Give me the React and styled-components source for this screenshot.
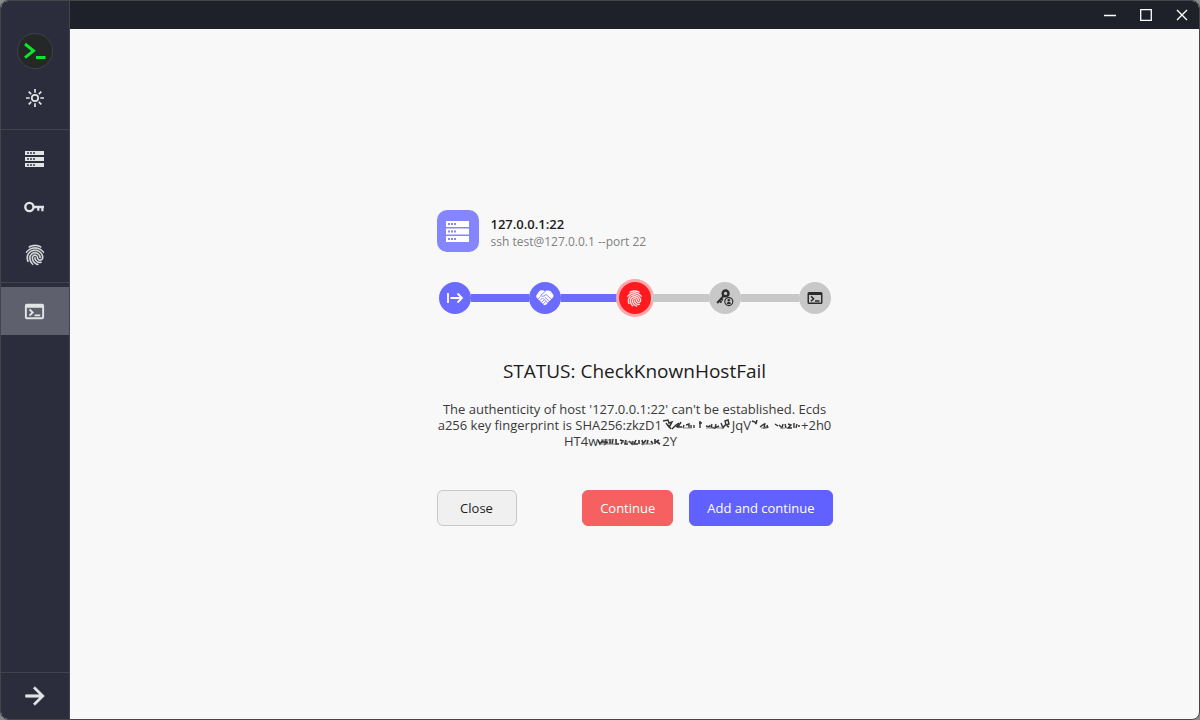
import React from "react";
import styled, { createGlobalStyle, css } from "styled-components";
import { MdArrowForward, MdFingerprint, MdTerminal } from "react-icons/md";

const GlobalStyle = createGlobalStyle`
  *, *::before, *::after { box-sizing: border-box; }
  html, body, #root { height: 100%; }
  body {
    margin: 0;
    background: #8a8a8a;
    color: #1c1c1c;
    font-family: "Open Sans", "Noto Sans", sans-serif;
    font-size: 14px;
  }
  button { font: inherit; cursor: pointer; }
`;

const Window = styled.div`
  display: flex;
  height: 100%;
  overflow: hidden;
  border: 1px solid #43454a;
  border-radius: 8px;
  background: #f8f8f8;
`;

const Sidebar = styled.nav`
  display: flex;
  flex: none;
  flex-direction: column;
  width: 69px;
  border-right: 1px solid #41434f;
  background: #2b2d3c;
`;

const SidebarGroup = styled.div`
  display: flex;
  flex-direction: column;
  align-items: center;
  padding: ${({ $pad }) => $pad || "0"};
  border-bottom: ${({ $line }) => ($line ? "1px solid #41434f" : "0")};
`;

const SidebarButton = styled.button`
  display: flex;
  align-items: center;
  justify-content: center;
  width: 100%;
  height: 48px;
  padding: 0 1px 0 0;
  border: 0;
  background: ${({ $active }) => ($active ? "#5e606d" : "transparent")};
  color: #e2e3e4;
`;

const SidebarFooter = styled(SidebarGroup)`
  margin-top: auto;
  border-top: 1px solid #41434f;

  ${SidebarButton} {
    height: 46px;
  }
`;

const Logo = styled.div`
  display: flex;
  align-items: center;
  justify-content: center;
  width: 36px;
  height: 36px;
  margin-bottom: 5px;
  border: 1px solid #3f414c;
  border-radius: 50%;
  background: #262727;
`;

const Main = styled.div`
  display: flex;
  flex: 1;
  flex-direction: column;
  min-width: 0;
`;

const TitleBar = styled.header`
  display: flex;
  flex: none;
  justify-content: flex-end;
  height: 28px;
  background: #1e2129;
`;

const WindowButton = styled.button`
  display: flex;
  align-items: center;
  justify-content: center;
  width: 36px;
  padding: 0 0 0 2px;
  border: 0;
  background: transparent;
  color: #fff;
`;

const Page = styled.main`
  display: flex;
  flex: 1;
  align-items: center;
  justify-content: center;
  padding-bottom: 12px;
`;

const Panel = styled.section`
  width: 396px;
`;

const Host = styled.div`
  display: flex;
  align-items: center;
  gap: 12px;
  height: 42px;
`;

const HostIcon = styled.div`
  display: flex;
  align-items: center;
  justify-content: center;
  width: 42px;
  height: 42px;
  border-radius: 10px;
  background: #8585ff;
  color: #fff;
`;

const HostText = styled.div`
  padding-top: 4px;
  line-height: 18px;
`;

const HostName = styled.div`
  font-size: 13px;
  font-weight: 600;
`;

const HostCommand = styled.div`
  color: #808080;
  font-size: 12px;
`;

const Steps = styled.ol`
  display: flex;
  align-items: center;
  margin: 27px 0 0;
  padding: 0 2px;
  height: 38px;
  list-style: none;
`;

const stepTones = {
  done: css`background: #6b6bff; color: #fff;`,
  failed: css`background: #ff1a1f; color: #fff; box-shadow: 0 0 0 3px #faa9ab;`,
  pending: css`background: #c8c8c8; color: #2c2c2c;`,
};

const Step = styled.li`
  display: flex;
  flex: none;
  align-items: center;
  justify-content: center;
  width: 32px;
  height: 32px;
  border-radius: 50%;
  ${({ $tone }) => stepTones[$tone]}
`;

const Connector = styled.li`
  flex: 1;
  height: 8px;
  background: ${({ $done }) => ($done ? "#6b6bff" : "#c8c8c8")};
`;

const Status = styled.h1`
  margin: 40px 0 0;
  font-size: 19px;
  font-weight: 400;
  line-height: 28px;
  text-align: center;
`;

const Message = styled.p`
  margin: 16px 0 0;
  color: #3a3a3a;
  font-size: 13px;
  line-height: 16px;
  text-align: center;
  white-space: nowrap;
`;

const MessageLine = styled.span`
  display: flex;
  align-items: center;
  justify-content: center;
`;

const Blank = styled.span`
  width: 28px;
`;

const Actions = styled.div`
  display: flex;
  gap: 16px;
  margin-top: 41px;
`;

const buttonTones = {
  plain: css`border-color: #c8c8c8; background: #f0f0f0; color: #1c1c1c; margin-right: auto;`,
  danger: css`border-color: #f66061; background: #f66061; color: #fff;`,
  primary: css`border-color: #6161ff; background: #6161ff; color: #fff;`,
};

const Button = styled.button`
  min-width: 80px;
  height: 36px;
  padding: 0 17px;
  border: 1px solid;
  border-radius: 6px;
  font-size: 13px;
  ${({ $tone }) => buttonTones[$tone]}
`;

const boldGlyph = css`
  path:not([fill="none"]) {
    stroke: currentColor;
    stroke-width: 0.6px;
  }

  path[fill="none"] {
    stroke: none;
  }
`;

const BoldFingerprint = styled(MdFingerprint)`${boldGlyph}`;

const BoldArrow = styled(MdArrowForward)`${boldGlyph}`;

const SunIcon = () => (
  <svg width="20" height="20" viewBox="0 0 20 20" fill="none" stroke="currentColor" strokeWidth="1.7" aria-hidden="true">
    <circle cx="10" cy="10" r="3.2" />
    <path d="M10 1v3.7M10 15.3V19M1 10h3.7M15.3 10H19M3.7 3.7l2.5 2.5M13.8 13.8l2.5 2.5M16.3 3.7l-2.5 2.5M6.2 13.8l-2.5 2.5" />
  </svg>
);

const ServerIcon = () => (
  <svg width="19" height="16" viewBox="0 0 19 16" fill="currentColor" aria-hidden="true">
    <path d="M0 0h19v4H0zM0 6h19v4H0zM0 12h19v4H0z" />
    <path fill="#62646f" d="M2 1h2v2H2zM5 1h2v2H5zM8 1h2v2H8zM2 7h2v2H2zM5 7h2v2H5zM8 7h2v2H8zM2 13h2v2H2zM5 13h2v2H5zM8 13h2v2H8z" />
  </svg>
);

const ServerTileIcon = () => (
  <svg width="23" height="21" viewBox="0 0 23 21" fill="#fff" aria-hidden="true">
    <path d="M0 0h23v6H0zM0 7.6h23v5.8H0zM0 15h23v6H0z" />
    <path fill="#8585ff" d="M2 2h2v2H2zM5 2h2v2H5zM8 2h2v2H8zM2 9.5h2v2H2zM5 9.5h2v2H5zM8 9.5h2v2H8zM2 17h2v2H2zM5 17h2v2H5zM8 17h2v2H8z" />
  </svg>
);

const KeyIcon = () => (
  <svg width="21" height="12" viewBox="0 0 21 12" fill="none" stroke="currentColor" aria-hidden="true">
    <circle cx="5.4" cy="6" r="4.1" strokeWidth="2.4" />
    <path d="M9.5 6H20" strokeWidth="2.6" />
    <path d="M14.3 6v3.8M18.4 6v4.2" strokeWidth="2.2" />
  </svg>
);

const MapsToIcon = () => (
  <svg width="18" height="14" viewBox="0 0 18 14" fill="none" stroke="currentColor" strokeWidth="1.8" aria-hidden="true">
    <path d="M2 2v10M4.5 7H16M11.5 2.5L16 7l-4.5 4.5" />
  </svg>
);

const HandshakeIcon = () => (
  <svg width="18" height="16" viewBox="0 0 18 16" aria-hidden="true">
    <path fill="currentColor" d="M3.4.9C4.6.2 6.6.2 8 .8l1 .3 1-.4c1.5-.5 3.3-.4 4.5.3l2.6 3.6c.7 1 .6 2-.2 2.9l-6.6 7c-.8.9-1.9.9-2.8.1L.9 8C.1 7.1 0 6 .6 5z" />
    <g fill="none" stroke="#6b6bff" strokeWidth=".8" strokeLinecap="round">
      <path d="M9.300 1.400L4.800 5.200c.6 1.500 2.300 1.400 3.300.5l1.900-1.300 5.400 4.900" />
      <path d="M8.800 7.200l4.500 4.200M7.300 8.600l3.900 4M2.200 8.700l2-2M4 10.400l2.200-2.200M5.800 12.100L8 9.900M7.600 13.600l1.800-1.900" />
    </g>
  </svg>
);

const KeyUserIcon = () => (
  <svg width="18" height="18" viewBox="0 0 18 18" fill="none" stroke="currentColor" aria-hidden="true">
    <circle cx="9.600" cy="4.400" r="2.900" strokeWidth="2.400" />
    <path d="M7.600 6.800L1.200 14M3.200 11.600l2.400 2M5 9.600l1.800 1.600" strokeWidth="2" />
    <circle cx="12.800" cy="12.600" r="4.900" fill="#c8c8c8" stroke="none" />
    <circle cx="12.800" cy="12.600" r="4" strokeWidth="1.200" />
    <circle cx="12.800" cy="11.300" r="1.300" fill="currentColor" stroke="none" />
    <path d="M10.600 14.600c.4-1.200 1.300-1.500 2.200-1.500s1.800.3 2.200 1.500c-1.200 1-3.200 1-4.400 0z" fill="currentColor" stroke="none" />
  </svg>
);

const ScribbleA = () => (
  <svg width="70" height="14" viewBox="0 0 68 14" fill="none" stroke="#333" strokeWidth="1.4" aria-hidden="true">
    <path d="M0 3l5-1 1 3 3-1-2 4M3 5l3 4 2-3M5 7l3 4M9 11l4-4 3-2M13 9l5-4M18 4l-3 5h4M21 7l-1 3M23 7l3-1v4M28 7v3M31 7v3M37 3v7M36 5h3M43 8l3 1 1-2M49 6l-1 3 3 1M53 6l-1 4 4-2M58 5l2 5 2-3M62 3l3-1 1 4-3 1zM64 8l2 1" />
    <path d="M20 10h9M43 10h8M54 10h6" stroke="#888" strokeWidth="1" />
  </svg>
);

const ScribbleB = () => (
  <svg width="50" height="14" viewBox="0 0 48 14" fill="none" stroke="#333" strokeWidth="1.4" aria-hidden="true">
    <path d="M0 3l3 1 1 2M5 2l-1 4M8 9l4-3M13 5l-1 5 3-1M15 7l1 3M23 6l3 2M27 7l3 3 1-4M33 6l1 4M36 6l3 1-3 3h4M42 5v5M45 6l-1 4M46 8h2" />
    <path d="M9 10h6M28 10h5" stroke="#888" strokeWidth="1" />
  </svg>
);

const ScribbleC = () => (
  <svg width="64" height="14" viewBox="0 0 64 14" fill="none" stroke="#333" strokeWidth="1.6" aria-hidden="true">
    <path d="M0 6l2 4 3-4M4 8h5M8 5l-1 5 3-2M12 5v5M15 5l-1 5M18 5v5h3M22 6l3 1-2 3M28 6l-1 4h3M31 7l3 3 1-3M38 6l-2 4h4M41 6v4M44 6l1 4 3-4M50 6l-1 4M53 7l2 3M57 5v5M58 8l3-2M59 8l3 2" />
    <path d="M2 10h16M3 6h12M24 8h12M43 10h12" stroke="#777" strokeWidth="1" />
  </svg>
);

export default function App() {
  return (
    <>
      <GlobalStyle />
      <Window>
        <Sidebar aria-label="Main">
          <SidebarGroup $pad="32px 0 7px" $line>
            <Logo>
              <svg width="24" height="20" viewBox="0 0 24 20" fill="none" stroke="#0be52a" strokeWidth="3" role="img" aria-label="Terminal">
                <path d="M2 3L10.5 9.8 2 16.6" />
                <path d="M13 16.6h9.500" />
              </svg>
            </Logo>
            <SidebarButton aria-label="Theme"><SunIcon /></SidebarButton>
          </SidebarGroup>
          <SidebarGroup $pad="5px 0 3px" $line>
            <SidebarButton aria-label="Hosts"><ServerIcon /></SidebarButton>
            <SidebarButton aria-label="Keys"><KeyIcon /></SidebarButton>
            <SidebarButton aria-label="Known hosts"><BoldFingerprint size={24} /></SidebarButton>
          </SidebarGroup>
          <SidebarGroup $pad="4px 0 0">
            <SidebarButton aria-label="Session" $active><MdTerminal size={23} /></SidebarButton>
          </SidebarGroup>
          <SidebarFooter>
            <SidebarButton aria-label="Expand"><BoldArrow size={28} /></SidebarButton>
          </SidebarFooter>
        </Sidebar>
        <Main>
          <TitleBar>
            <WindowButton aria-label="Minimize">
              <svg width="12" height="12" stroke="currentColor" fill="none"><path d="M0 6.5h12" strokeWidth="1.5" /></svg>
            </WindowButton>
            <WindowButton aria-label="Maximize">
              <svg width="12" height="12" stroke="currentColor" fill="none"><path d="M.7 .7h10.6v10.6H.7z" strokeWidth="1.3" /></svg>
            </WindowButton>
            <WindowButton aria-label="Close window">
              <svg width="12" height="12" stroke="currentColor" fill="none"><path d="M1 1l10 10M11 1L1 11" strokeWidth="1.4" /></svg>
            </WindowButton>
          </TitleBar>
          <Page>
            <Panel>
              <Host>
                <HostIcon><ServerTileIcon /></HostIcon>
                <HostText>
                  <HostName>127.0.0.1:22</HostName>
                  <HostCommand>ssh test@127.0.0.1 --port 22</HostCommand>
                </HostText>
              </Host>
              <Steps>
                <Step $tone="done"><MapsToIcon /></Step>
                <Connector $done />
                <Step $tone="done"><HandshakeIcon /></Step>
                <Connector $done />
                <Step $tone="failed"><BoldFingerprint size={19} /></Step>
                <Connector />
                <Step $tone="pending"><KeyUserIcon /></Step>
                <Connector />
                <Step $tone="pending"><MdTerminal size={18} /></Step>
              </Steps>
              <Status>STATUS: CheckKnownHostFail</Status>
              <Message>
                <MessageLine>The authenticity of host '127.0.0.1:22' can't be established. Ecds</MessageLine>
                <MessageLine>a256 key fingerprint is SHA256:zkzD1<ScribbleA />JqV<ScribbleB />+2h0</MessageLine>
                <MessageLine>HT4w<ScribbleC />2Y<Blank /></MessageLine>
              </Message>
              <Actions>
                <Button $tone="plain">Close</Button>
                <Button $tone="danger">Continue</Button>
                <Button $tone="primary">Add and continue</Button>
              </Actions>
            </Panel>
          </Page>
        </Main>
      </Window>
    </>
  );
}
